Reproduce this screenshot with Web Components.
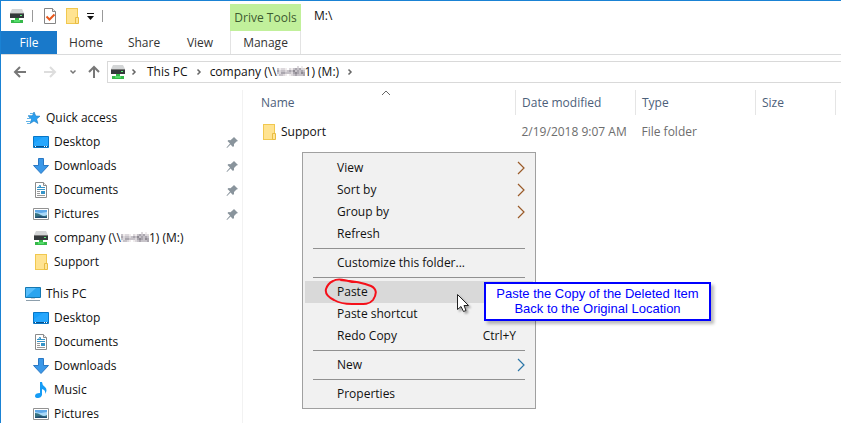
<!DOCTYPE html>
<html lang="en">
<head>
<meta charset="utf-8">
<title>M:\</title>
<style>
    html, body { height: 100%; margin: 0; }
    body {
        font: 12px/16px "Open Sans", "Noto Sans", sans-serif;
        color: #111;
        background: #fff;
        overflow: hidden;
    }
</style>
</head>
<body>
<explorer-window></explorer-window>

<script>
const icons = {
    drive: `<path d="M3 1h10l2 4H1z" fill="#d3d5d6"/><path d="M1 5h14v5H1z" fill="#34393b"/><path d="M1 5h14v1H1z" fill="#777"/><path d="M11 7h2v1h-2z" fill="#5df07a"/><path d="M6 10h4v2h4v3H2v-3h4z" fill="#36b84a"/><path d="M5 12h6v2H5z" fill="#53dc69"/>`,
    folder: `<path d="M2 0h12v16H2z" fill="#f1c84f"/><path d="M3 1h10v14H3z" fill="#ffe391"/><path d="M11.500 9.500h3v6h-3z" fill="#ffe597" stroke="#e9bc42"/>`,
    props: `<path d="M2.500 .500h8l3 3v12h-11z" fill="#fff" stroke="#858585"/><path d="M10.500 .500v3h3" fill="#eee" stroke="#858585"/><path d="M4.500 8.500l3 3 5-5" fill="none" stroke="#e8581c" stroke-width="2"/>`,
    star: `<path d="M9 2l1.800 4 4.200.200-3.400 2.800 1.300 4.500L9 11 5.200 13.500 6.500 9.300 3.500 6.500l3.800-.500z" fill="#2a9ff0" stroke="#1678c0" stroke-width=".6"/><path d="M3 5.500h4M2 8.500h4M1 11.500h5M2 13.500h3M5 3.500h3" stroke="#63b4e8"/>`,
    desktop: `<path d="M.500 2.500h15v11H.500z" fill="#18a0fb" stroke="#0876c6"/><path d="M1 9l9-6h5v9H1z" fill="#35adff" opacity=".5"/><path d="M1 12h14v1H1z" fill="#07508b"/><path d="M2 12h1v1H2zM11 12h1v1h-1zM13 12h1v1h-1z" fill="#fff"/>`,
    down: `<path d="M5.500 .500h5v7h5L8 15.500.500 7.500h5z" fill="#3b98e8" stroke="#2a78c4"/>`,
    doc: `<path d="M2.500 .500h8l3 3v12h-11z" fill="#fff" stroke="#8b8b8b"/><path d="M10.500 .500v3h3" fill="#eee" stroke="#8b8b8b"/><path d="M5 6l2-3 1 3M4 5.500h5M9 5.500h3M4 7.500h8" fill="none" stroke="#3694c8"/><path d="M4 9.500h3M4 11.500h3M4 13.500h8" stroke="#999"/><path d="M8 9h4v3H8z" fill="#3694c8"/>`,
    picture: `<path d="M.500 2.500h15v11H.500z" fill="#fff" stroke="#929292"/><path d="M2 4h12v8H2z" fill="#aad8f7"/><path d="M2 4h12v2L8 7 2 6z" fill="#5fa8e7"/><path d="M2 7q3 0 6 2t6 0v3H2z" fill="#367281"/><path d="M2 11l5-1 7 1v1H2z" fill="#214d70"/>`,
    pc: `<path d="M.500 1.500h15v10H.500z" fill="#56bdfb" stroke="#1578b1"/><path d="M1 11L11 2h4v9z" fill="#2ba5ef"/><path d="M6 12h4v1H6z" fill="#ccd4da"/><path d="M1 14h14v1H1z" fill="#8d9fac"/>`,
    music: `<path d="M7 0h2q0 3 3 5 3 3 0 7 1-4-3-5v6q-1 3-4 3t-3-2q0-3 5-3z" fill="#169cf5"/>`,
    pin: `<path d="M11 3l4 4-1.500.500-2.500 2.500 0 2-1 1-2.500-2.500L4 14l-.500-.500 3.500-4L4.500 7l1-1 2 .200L10 4z" fill="#89949c"/>`,
    back: `<path d="M14 8H3M8 3L3 8l5 5" fill="none" stroke="#777" stroke-width="2"/>`,
    forward: `<path d="M2 8h11M8 3l5 5-5 5" fill="none" stroke="#ddd" stroke-width="2"/>`,
    up: `<path d="M8 14V4M3 8l5-5 5 5" fill="none" stroke="#777" stroke-width="2"/>`,
    recent: `<path d="M5.500 6.500L8 9l2.500-2.500" fill="none" stroke="#777" stroke-width="1.5"/>`,
    crumb: `<path d="M6.500 5.500L9 8l-2.500 2.500" fill="none" stroke="#666" stroke-width="1.5"/>`,
    more: `<path d="M5 5h7v1H5zM5 8h7l-3.500 4z" fill="#111"/>`,
    sort: `<path d="M4 10l4-4 4 4" fill="none" stroke="#666"/>`,
    submenu: `<path d="M5 2l6 6-6 6" fill="none" stroke="currentColor" stroke-width="1.2"/>`
};

// Shared base: open shadow root filled from the class's markup
class BaseElement extends HTMLElement {
    connectedCallback() {
        if (this.shadowRoot) return;
        const template = document.createElement('template');
        template.innerHTML = this.render();
        this.attachShadow({ mode: 'open' });
        this.shadowRoot.appendChild(template.content.cloneNode(true));
    }
}

class UiIcon extends BaseElement {
    render() {
        return `
            <style>
                :host { display: block; flex: none; width: 16px; height: 16px; }
                svg { display: block; }
            </style>
            <svg width="16" height="16" viewBox="0 0 16 16" aria-hidden="true">${icons[this.getAttribute('name')]}</svg>`;
    }
}

// Server name with its readable part covered by a mosaic
class MaskedName extends BaseElement {
    render() {
        const rows = ['..........2.1.', '31221.21343422', '42332343534343', '32443332454354', '13321.12343334'];
        const shades = { 1: '#f0eced', 2: '#dcd8dc', 3: '#c6c2c8', 4: '#aaa6ae', 5: '#8f8b93' };
        let cells = '';
        rows.forEach((row, y) => [...row].forEach((c, x) => {
            if (shades[c]) cells += `<rect x="${x * 2}" y="${y * 2}" width="2" height="2" fill="${shades[c]}"/>`;
        }));
        return `
            <style>
                :host { display: inline-flex; vertical-align: baseline; }
                svg { display: block; }
            </style>
            <svg width="28" height="10" viewBox="0 0 28 10" aria-hidden="true">${cells}</svg>`;
    }
}

class TitleBar extends BaseElement {
    render() {
        return `
            <style>
                :host { display: flex; height: 30px; }
                .quick { display: flex; align-items: center; box-sizing: border-box; width: 229px; padding-left: 8px; }
                button { border: 0; padding: 0; background: none; }
                i { width: 1px; height: 12px; background: #999; margin: 0 9px 0 7px; }
                .folder { margin-left: 6px; }
                .more { margin-left: 2px; }
                .more + i { margin-left: 4px; }
                .tools { box-sizing: border-box; width: 71px; margin-top: 3px; padding-top: 6px; background: #c1f09b; color: #3d5b31; text-align: center; }
                .title { padding: 7px 13px; }
            </style>
            <div class="quick">
                <ui-icon name="drive"></ui-icon><i></i>
                <button aria-label="Properties"><ui-icon name="props"></ui-icon></button>
                <button class="folder" aria-label="New folder"><ui-icon name="folder"></ui-icon></button>
                <button class="more" aria-label="Customize toolbar"><ui-icon name="more"></ui-icon></button><i></i>
            </div>
            <div class="tools">Drive Tools</div>
            <div class="title">M:\\</div>`;
    }
}

class RibbonTabs extends BaseElement {
    render() {
        return `
            <style>
                :host { display: flex; height: 23px; border-bottom: 1px solid #dadbdc; }
                button { font: inherit; color: #333; border: 0; padding: 1px 0 0; background: none; width: 58px; }
                .file { width: 56px; background: #1979ca; color: #fff; }
                .view { width: 54px; }
                .manage { width: 71px; margin-left: 3px; border: solid #e3e3e3; border-width: 0 1px; }
            </style>
            <button class="file">File</button>
            <button>Home</button>
            <button>Share</button>
            <button class="view">View</button>
            <button class="manage">Manage</button>`;
    }
}

class AddressBar extends BaseElement {
    render() {
        return `
            <style>
                :host { display: flex; padding: 6px 0 6px 11px; }
                .nav { display: flex; align-items: center; width: 95px; }
                button { border: 0; padding: 0; background: none; }
                .forward { margin-left: 14px; }
                .recent { margin-left: 7px; }
                .up { margin-left: 5px; }
                .path { flex: 1; display: flex; align-items: center; height: 20px; padding-left: 2px; border: 1px solid #d9d9d9; border-right: 0; }
                a { color: inherit; text-decoration: none; white-space: pre; }
                .path ui-icon + ui-icon { margin-right: 5px; }
                a + ui-icon { margin: 0 3px; }
            </style>
            <div class="nav">
                <button aria-label="Back"><ui-icon name="back"></ui-icon></button>
                <button class="forward" aria-label="Forward"><ui-icon name="forward"></ui-icon></button>
                <button class="recent" aria-label="Recent locations"><ui-icon name="recent"></ui-icon></button>
                <button class="up" aria-label="Up"><ui-icon name="up"></ui-icon></button>
            </div>
            <div class="path">
                <ui-icon name="drive"></ui-icon><ui-icon name="crumb"></ui-icon>
                <a href="#pc">This PC</a><ui-icon name="crumb"></ui-icon>
                <a href="#company">company (\\\\<masked-name></masked-name>1) (M:)</a><ui-icon name="crumb"></ui-icon>
            </div>`;
    }
}

class NavItem extends BaseElement {
    render() {
        const pin = this.hasAttribute('pinned') ? '<ui-icon name="pin"></ui-icon>' : '';
        return `
            <style>
                :host { display: block; }
                a { display: flex; align-items: center; height: 24px; padding: 0 3px 0 32px; color: inherit; text-decoration: none; }
                span { flex: 1; padding-left: 5px; white-space: nowrap; }
                :host([root]) a { padding-left: 24px; }
            </style>
            <a href="#"><ui-icon name="${this.getAttribute('icon')}"></ui-icon><span><slot></slot></span>${pin}</a>`;
    }
}

class NavPane extends BaseElement {
    render() {
        return `
            <style>
                :host { display: block; box-sizing: border-box; width: 242px; padding-top: 16px; border-right: 1px solid #f2f2f2; }
                .group { margin-bottom: 8px; }
            </style>
            <div class="group">
                <nav-item root icon="star">Quick access</nav-item>
                <nav-item icon="desktop" pinned>Desktop</nav-item>
                <nav-item icon="down" pinned>Downloads</nav-item>
                <nav-item icon="doc" pinned>Documents</nav-item>
                <nav-item icon="picture" pinned>Pictures</nav-item>
                <nav-item icon="drive">company (\\\\<masked-name></masked-name>1) (M:)</nav-item>
                <nav-item icon="folder">Support</nav-item>
            </div>
            <nav-item root icon="pc">This PC</nav-item>
            <nav-item icon="desktop">Desktop</nav-item>
            <nav-item icon="doc">Documents</nav-item>
            <nav-item icon="down">Downloads</nav-item>
            <nav-item icon="music">Music</nav-item>
            <nav-item icon="picture">Pictures</nav-item>`;
    }
}

class FileList extends BaseElement {
    render() {
        return `
            <style>
                :host { display: block; flex: 1; padding-right: 5px; }
                table { width: 100%; border-collapse: collapse; table-layout: fixed; }
                th, td { padding: 0 0 0 6px; text-align: left; font-weight: normal; white-space: nowrap; }
                th { height: 25px; color: #4c607a; border-right: 1px solid #e5e5e5; }
                th:first-child, td:first-child { padding-left: 18px; }
                td { height: 34px; color: #6d6d6d; }
                .head, .name { display: flex; align-items: center; }
                .head ui-icon { margin: -20px 0 0 83px; }
                .name { gap: 4px; color: #111; }
                .date { width: 120px; }
                .size { width: 80px; }
            </style>
            <table>
                <colgroup><col><col class="date"><col class="date"><col class="size"></colgroup>
                <thead><tr>
                    <th><div class="head">Name<ui-icon name="sort"></ui-icon></div></th>
                    <th>Date modified</th><th>Type</th><th>Size</th>
                </tr></thead>
                <tbody><tr>
                    <td><div class="name"><ui-icon name="folder"></ui-icon>Support</div></td>
                    <td>2/19/2018 9:07 AM</td><td>File folder</td><td></td>
                </tr></tbody>
            </table>`;
    }
}

class MenuItem extends BaseElement {
    render() {
        const key = this.getAttribute('key');
        return `
            <style>
                :host { display: block; }
                button { display: flex; align-items: center; width: 100%; height: 22px; padding: 0 4px 0 32px; border: 0; background: none; font: inherit; color: inherit; }
                :host([active]) button { background: #d9d9d9; }
                .label { flex: 1; text-align: left; }
                .key { margin-right: 13px; }
                ui-icon { color: #9a5a28; }
                :host([submenu="new"]) ui-icon { color: #2c76a8; }
            </style>
            <button role="menuitem"><span class="label"><slot></slot></span>
            ${key ? `<span class="key">${key}</span>` : ''}
            ${this.hasAttribute('submenu') ? '<ui-icon name="submenu"></ui-icon>' : ''}</button>`;
    }
}

class ContextMenu extends BaseElement {
    render() {
        return `
            <style>
                :host { display: block; box-sizing: border-box; width: 234px; padding: 4px 2px 3px; border: 1px solid #a0a0a0; background: #f1f1f1; }
                hr { margin: 3px 8px; border: 0; border-top: 1px solid #919191; }
            </style>
            <menu-item submenu="view">View</menu-item>
            <menu-item submenu="sort">Sort by</menu-item>
            <menu-item submenu="group">Group by</menu-item>
            <menu-item>Refresh</menu-item>
            <hr>
            <menu-item>Customize this folder...</menu-item>
            <hr>
            <menu-item active>Paste</menu-item>
            <menu-item>Paste shortcut</menu-item>
            <menu-item key="Ctrl+Y">Redo Copy</menu-item>
            <hr>
            <menu-item submenu="new">New</menu-item>
            <hr>
            <menu-item>Properties</menu-item>`;
    }
}

class CalloutNote extends BaseElement {
    render() {
        return `
            <style>
                :host { display: block; box-sizing: border-box; width: 227px; padding: 2px 0 3px; border: 2px solid #00f; background: #fff; color: #00f; font: 13px/15px "Liberation Sans", Arial, sans-serif; text-align: center; white-space: nowrap; box-shadow: 3px 3px 3px #0004; }
            </style>
            <slot></slot>`;
    }
}

class ExplorerWindow extends BaseElement {
    render() {
        return `
            <style>
                :host { display: flex; flex-direction: column; box-sizing: border-box; height: 100%; position: relative; border: solid #1a82d4; border-width: 1px 0 0 1px; overflow: hidden; }
                main { flex: 1; display: flex; min-height: 0; padding-top: 1px; }
                /* floating layers above the file list */
                context-menu { position: absolute; left: 301px; top: 151px; }
                callout-note { position: absolute; left: 483px; top: 281px; }
                .ring { position: absolute; left: 322px; top: 276px; }
                .cursor { position: absolute; left: 455px; top: 292px; filter: drop-shadow(2px 2px 1px #0005); }
            </style>
            <title-bar></title-bar>
            <ribbon-tabs></ribbon-tabs>
            <address-bar></address-bar>
            <main>
                <nav-pane></nav-pane>
                <file-list></file-list>
            </main>
            <context-menu role="menu"></context-menu>
            <svg class="ring" width="56" height="30" viewBox="0 0 56 30" aria-hidden="true"><path d="M29 5C20 2 13 2 10 4 6 6 4 9 3 12c-1 4 2 8 8 11 5 3 10 4 18 4 10 0 17 1 21-4 4-6 4-11-2-14C41 6 30 4 17 3" fill="none" stroke="#f5101a" stroke-width="2"/></svg>
            <svg class="cursor" width="16" height="22" viewBox="0 0 16 22" aria-hidden="true"><path d="M1.500 1.500v15l3.500-3 2.500 5 2.500-1-2-5h4.500z" fill="#fff" stroke="#222"/></svg>
            <callout-note>Paste the Copy of the Deleted Item<br>Back to the Original Location</callout-note>`;
    }
}

customElements.define('ui-icon', UiIcon);
customElements.define('masked-name', MaskedName);
customElements.define('title-bar', TitleBar);
customElements.define('ribbon-tabs', RibbonTabs);
customElements.define('address-bar', AddressBar);
customElements.define('nav-item', NavItem);
customElements.define('nav-pane', NavPane);
customElements.define('file-list', FileList);
customElements.define('menu-item', MenuItem);
customElements.define('context-menu', ContextMenu);
customElements.define('callout-note', CalloutNote);
customElements.define('explorer-window', ExplorerWindow);
</script>
</body>
</html>
